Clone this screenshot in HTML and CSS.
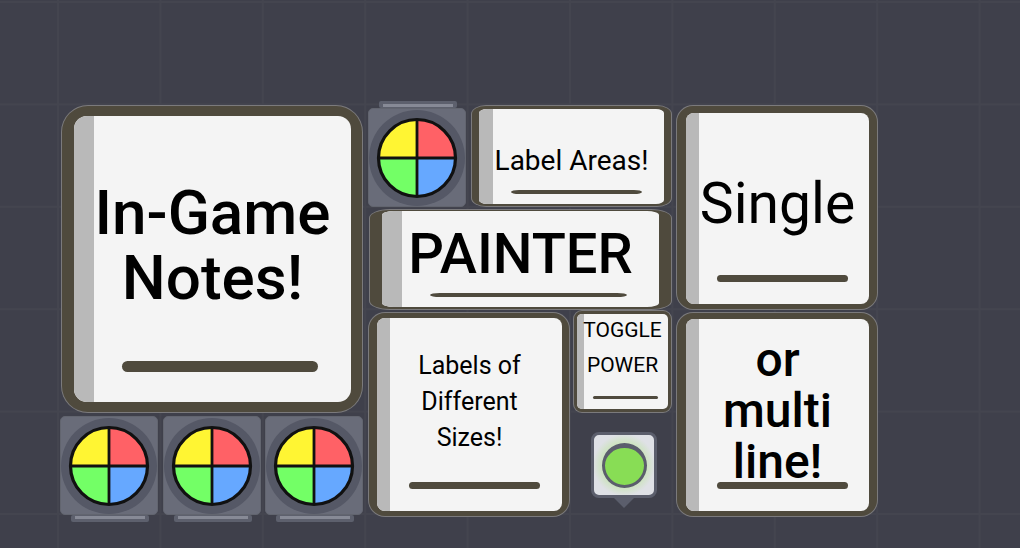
FILE: index.html
```html
<!DOCTYPE html>
<html lang="en">

<head>
    <meta charset="UTF-8" />
    <title>In-Game Notes</title>
    <link rel="stylesheet" href="styles.css">
</head>

<body>
    <main class="canvas">

        <div class="note note-big">
            <div class="face">
                <p class="label">In-Game<br>Notes!</p>
                <div class="bar"></div>
            </div>
        </div>

        <div class="note note-areas">
            <div class="face">
                <p class="label">Label Areas!</p>
                <div class="bar"></div>
            </div>
        </div>

        <div class="note note-painter">
            <div class="face">
                <p class="label">PAINTER</p>
                <div class="bar"></div>
            </div>
        </div>

        <div class="note note-single">
            <div class="face">
                <p class="label">Single</p>
                <div class="bar"></div>
            </div>
        </div>

        <div class="note note-sizes">
            <div class="face">
                <p class="label">Labels of<br>Different<br>Sizes!</p>
                <div class="bar"></div>
            </div>
        </div>

        <div class="note note-toggle">
            <div class="face">
                <p class="label">TOGGLE<br>POWER</p>
                <div class="bar"></div>
            </div>
        </div>

        <div class="note note-multi">
            <div class="face">
                <p class="label">or<br>multi<br>line!</p>
                <div class="bar"></div>
            </div>
        </div>

        <div class="knob knob-top">
            <span class="foot"></span>
            <svg class="dial" viewBox="0 0 96 96">
                <circle cx="48" cy="48" r="48" fill="#555866" />
                <path d="M48 48V10A38 38 0 0 0 10 48Z" fill="#fff533" />
                <path d="M48 48V10A38 38 0 0 1 86 48Z" fill="#ff6166" />
                <path d="M48 48H10A38 38 0 0 0 48 86Z" fill="#73ff66" />
                <path d="M48 48V86A38 38 0 0 0 86 48Z" fill="#66a8ff" />
                <path d="M48 10V86M10 48H86" stroke="#111" stroke-width="2.8" />
                <circle cx="48" cy="48" r="38.5" fill="none" stroke="#111" stroke-width="3.2" />
            </svg>
        </div>

        <div class="knob knob-a">
            <span class="foot"></span>
            <svg class="dial" viewBox="0 0 96 96">
                <circle cx="48" cy="48" r="48" fill="#555866" />
                <path d="M48 48V10A38 38 0 0 0 10 48Z" fill="#fff533" />
                <path d="M48 48V10A38 38 0 0 1 86 48Z" fill="#ff6166" />
                <path d="M48 48H10A38 38 0 0 0 48 86Z" fill="#73ff66" />
                <path d="M48 48V86A38 38 0 0 0 86 48Z" fill="#66a8ff" />
                <path d="M48 10V86M10 48H86" stroke="#111" stroke-width="2.8" />
                <circle cx="48" cy="48" r="38.5" fill="none" stroke="#111" stroke-width="3.2" />
            </svg>
        </div>

        <div class="knob knob-b">
            <span class="foot"></span>
            <svg class="dial" viewBox="0 0 96 96">
                <circle cx="48" cy="48" r="48" fill="#555866" />
                <path d="M48 48V10A38 38 0 0 0 10 48Z" fill="#fff533" />
                <path d="M48 48V10A38 38 0 0 1 86 48Z" fill="#ff6166" />
                <path d="M48 48H10A38 38 0 0 0 48 86Z" fill="#73ff66" />
                <path d="M48 48V86A38 38 0 0 0 86 48Z" fill="#66a8ff" />
                <path d="M48 10V86M10 48H86" stroke="#111" stroke-width="2.8" />
                <circle cx="48" cy="48" r="38.5" fill="none" stroke="#111" stroke-width="3.2" />
            </svg>
        </div>

        <div class="knob knob-c">
            <span class="foot"></span>
            <svg class="dial" viewBox="0 0 96 96">
                <circle cx="48" cy="48" r="48" fill="#555866" />
                <path d="M48 48V10A38 38 0 0 0 10 48Z" fill="#fff533" />
                <path d="M48 48V10A38 38 0 0 1 86 48Z" fill="#ff6166" />
                <path d="M48 48H10A38 38 0 0 0 48 86Z" fill="#73ff66" />
                <path d="M48 48V86A38 38 0 0 0 86 48Z" fill="#66a8ff" />
                <path d="M48 10V86M10 48H86" stroke="#111" stroke-width="2.8" />
                <circle cx="48" cy="48" r="38.5" fill="none" stroke="#111" stroke-width="3.2" />
            </svg>
        </div>

        <div class="led">
            <div class="led-lamp"></div>
        </div>

    </main>
</body>

</html>
```

FILE: styles.css
```css
* {
    margin: 0;
    padding: 0;
    box-sizing: border-box;
}

body {
    background-color: #3f404b;
    font-family: "Roboto", "Liberation Sans", sans-serif;
    overflow: hidden;
}

/* free canvas, everything on it is placed by its coordinates */
.canvas {
    position: relative;
    width: 1020px;
    height: 548px;
    background-image:
        linear-gradient(to right, #44454f 2px, transparent 2px),
        linear-gradient(to bottom, #44454f 2px, transparent 2px);
    background-size: 102.4px 102.4px;
    background-position: 57px 1px;
    overflow: hidden;
}

/* notes */
.note {
    position: absolute;
    border: 0 solid #4f4a3d;
    background-color: #4f4a3d;
    box-shadow: 0 0 0 1px #7b7a7c;
}

.face {
    position: relative;
    height: 100%;
    display: flex;
    flex-direction: column;
    align-items: center;
    background-color: #f4f4f4;
    overflow: hidden;
}

.face::before {
    content: "";
    position: absolute;
    left: 0;
    top: 0;
    bottom: 0;
    width: var(--strip);
    background-color: #b9b9b9;
}

.label {
    position: relative;
    flex: 1;
    min-height: 0;
    display: flex;
    align-items: center;
    text-align: center;
    color: #000;
}

.bar {
    position: relative;
    flex: none;
    background-color: #4f4a3d;
}

.note-big {
    --strip: 20px;
    left: 62px;
    top: 106px;
    width: 300px;
    height: 306px;
    border-width: 10px 11px 10px 12px;
    border-radius: 26px;
}

.note-big .face {
    border-radius: 13px;
}

.note-big .label {
    padding-top: 12px;
    font-size: 62px;
    font-weight: 500;
    line-height: 65px;
}

.note-big .bar {
    width: 196px;
    height: 11px;
    margin: 0 0 30px 14px;
    border-radius: 6px;
}

.note-areas {
    --strip: 14px;
    left: 472px;
    top: 106px;
    width: 199px;
    height: 100px;
    border-width: 3px 7px 2px 7px;
    border-radius: 14px / 8px;
}

.note-areas .face {
    border-radius: 8px / 4px;
}

.note-areas .label {
    padding-top: 22px;
    font-size: 28px;
}

.note-areas .bar {
    width: 131px;
    height: 4px;
    margin: 0 0 10px 10px;
    border-radius: 8px / 2px;
}

.note-painter {
    --strip: 20px;
    left: 370px;
    top: 210px;
    width: 301px;
    height: 99px;
    border-width: 1px 12px 2px 12px;
    border-radius: 20px / 8px;
}

.note-painter .face {
    border-radius: 12px / 4px;
}

.note-painter .label {
    padding-top: 4px;
    font-size: 56px;
    font-weight: 500;
}

.note-painter .bar {
    width: 197px;
    height: 4px;
    margin: 0 0 10px 16px;
    border-radius: 10px / 2px;
}

.note-single,
.note-sizes,
.note-multi {
    --strip: 13px;
    width: 200px;
    height: 203px;
    border-width: 6px 8px 5px 9px;
    border-radius: 16px;
}

.note-single .face,
.note-sizes .face,
.note-multi .face {
    border-radius: 8px;
}

.note-single .bar,
.note-sizes .bar,
.note-multi .bar {
    width: 131px;
    height: 7px;
    margin: 0 0 22px 10px;
    border-radius: 4px;
}

.note-single {
    left: 677px;
    top: 106px;
    border-top-width: 7px;
}

.note-single .label {
    padding-top: 18px;
    font-size: 57px;
}

.note-sizes {
    left: 369px;
    top: 313px;
    border-left-width: 8px;
    border-right-width: 7px;
    border-top-width: 5px;
}

.note-sizes .label {
    padding-top: 4px;
    font-size: 25px;
    line-height: 36px;
}

.note-multi {
    left: 677px;
    top: 313px;
}

.note-multi .label {
    padding-top: 20px;
    font-size: 48px;
    font-weight: 500;
    line-height: 51px;
}

.note-toggle {
    --strip: 7px;
    left: 574px;
    top: 311px;
    width: 97px;
    height: 101px;
    border-width: 3px;
    border-radius: 8px;
}

.note-toggle .face {
    border-radius: 5px;
}

.note-toggle .label {
    padding-bottom: 15px;
    font-size: 21px;
    line-height: 35px;
}

.note-toggle .bar {
    width: 65px;
    height: 3px;
    margin: 0 0 10px 5px;
    border-radius: 2px;
}

/* knobs */
.knob {
    position: absolute;
    width: 98px;
    height: 99px;
    display: flex;
    align-items: center;
    justify-content: center;
    background-color: #696c79;
    border: 1px solid #62656f;
    border-radius: 5px;
}

.dial {
    position: relative;
    width: 96px;
    height: 96px;
}

.foot {
    position: absolute;
    left: 10px;
    width: 78px;
    height: 7px;
    background-color: #5d606d;
    border-radius: 2px;
}

.foot::after {
    content: "";
    position: absolute;
    left: 4px;
    right: 4px;
    height: 3px;
    background-color: #878a96;
}

.knob-a .foot,
.knob-b .foot,
.knob-c .foot {
    top: 98px;
}

.knob-a .foot::after,
.knob-b .foot::after,
.knob-c .foot::after {
    top: 1px;
}

.knob-top .foot {
    top: -8px;
}

.knob-top .foot::after {
    bottom: 1px;
}

.knob-top {
    left: 368px;
    top: 108px;
}

.knob-a {
    left: 60px;
    top: 416px;
}

.knob-b {
    left: 163px;
    top: 416px;
}

.knob-c {
    left: 265px;
    top: 416px;
}

/* power led */
.led {
    position: absolute;
    left: 591px;
    top: 432px;
    width: 66px;
    height: 66px;
    display: flex;
    align-items: center;
    justify-content: center;
    background: radial-gradient(circle, #cfe3c4 0, #cfe3c4 23px, #dfe1e6 31px);
    border: 3px solid #5b5e6c;
    border-radius: 8px;
}

.led::after {
    content: "";
    position: absolute;
    left: 20px;
    top: 63px;
    border-style: solid;
    border-width: 10px 10px 0 10px;
    border-color: #5b5e6c transparent transparent transparent;
}

.led-lamp {
    width: 45px;
    height: 45px;
    background-color: #88dd55;
    border: 3px solid #5b5e6c;
    border-top-width: 5px;
    border-radius: 50%;
}
```
